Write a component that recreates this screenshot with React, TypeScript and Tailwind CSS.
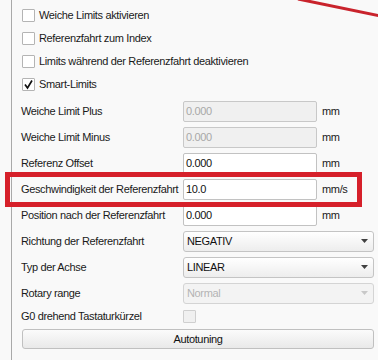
import React from 'react';

const font = { fontFamily: '"Liberation Sans", Arial, sans-serif' };

function Check({ checked = false, disabled = false }: { checked?: boolean; disabled?: boolean }) {
  return (
    <div
      className={
        'w-[13px] h-[13px] shrink-0 border rounded-[1px] flex items-center justify-center ' +
        (disabled ? 'bg-[#f0f0f0] border-[#cfcfcf]' : 'bg-white border-[#b4b4b4]')
      }
    >
      {checked && (
        <svg width="11" height="11" viewBox="0 0 11 11">
          <path d="M2 5.5 L4.5 9 L9 1.5" fill="none" stroke="#111" strokeWidth="1.7" />
        </svg>
      )}
    </div>
  );
}

function CheckRow({ label, checked }: { label: string; checked?: boolean }) {
  return (
    <div className="h-[23px] flex items-center gap-[4px] ml-px">
      <Check checked={checked} />
      <span className="text-[#1a1a1a]">{label}</span>
    </div>
  );
}

function InputRow({ label, value, unit, disabled }: { label: string; value: string; unit: string; disabled?: boolean }) {
  return (
    <div className="h-[26px] flex items-center">
      <span className="w-[162px] shrink-0 text-[#1a1a1a]">{label}</span>
      <div
        className={
          'w-[134px] h-[21px] border rounded-[2px] flex items-center px-[2px] ' +
          (disabled ? 'bg-[#f0f0f0] border-[#c8c8c8] text-[#a8a8a8]' : 'bg-white border-[#c2c2c2] text-[#111]')
        }
      >
        {value}
      </div>
      <span className="ml-[5px] text-[#1a1a1a]">{unit}</span>
    </div>
  );
}

function SelectRow({ label, value, disabled }: { label: string; value: string; disabled?: boolean }) {
  return (
    <div className="h-[26px] flex items-center">
      <span className="w-[162px] shrink-0 text-[#1a1a1a]">{label}</span>
      <div
        className={
          'w-[191px] h-[21px] border rounded-[3px] flex items-center justify-between pl-[3px] pr-[5px] ' +
          (disabled
            ? 'bg-[#f3f3f3] border-[#d4d4d4] text-[#b4b4b4]'
            : 'bg-gradient-to-b from-white to-[#ededed] border-[#c4c4c4] text-[#111]')
        }
      >
        <span>{value}</span>
        <svg width="7" height="4" viewBox="0 0 7 4">
          <polygon points="0,0 7,0 3.5,4" fill={disabled ? '#c8c8c8' : '#404040'} />
        </svg>
      </div>
    </div>
  );
}

export default function App() {
  return (
    <div className="relative w-[378px] h-[360px] overflow-hidden bg-[#f9f9f9] text-[11px] tracking-[-0.35px]" style={font}>
      <div className="ml-[11px] h-full border-l border-[#a9a9a9] pl-[9px] pt-[4px]">
        <CheckRow label="Weiche Limits aktivieren" />
        <CheckRow label="Referenzfahrt zum Index" />
        <CheckRow label="Limits während der Referenzfahrt deaktivieren" />
        <CheckRow label="Smart-Limits" checked />
        <div className="mt-[2px]">
          <InputRow label="Weiche Limit Plus" value="0.000" unit="mm" disabled />
          <InputRow label="Weiche Limit Minus" value="0.000" unit="mm" disabled />
          <InputRow label="Referenz Offset" value="0.000" unit="mm" />
          <InputRow label="Geschwindigkeit der Referenzfahrt" value="10.0" unit="mm/s" />
          <InputRow label="Position nach der Referenzfahrt" value="0.000" unit="mm" />
          <SelectRow label="Richtung der Referenzfahrt" value="NEGATIV" />
          <SelectRow label="Typ der Achse" value="LINEAR" />
          <SelectRow label="Rotary range" value="Normal" disabled />
          <div className="h-[21px] flex items-center">
            <span className="w-[162px] shrink-0 text-[#1a1a1a]">G0 drehend Tastaturkürzel</span>
            <Check disabled />
          </div>
        </div>
        <div className="mt-[2px] ml-px w-[352px] h-[20px] border border-[#c0c0c0] rounded-[3px] bg-gradient-to-b from-[#fbfbfb] to-[#e9e9e9] flex items-center justify-center text-[#111]">
          Autotuning
        </div>
      </div>

      <div className="absolute left-[5px] top-[172px] w-[357px] h-[35px] border-[5px] border-[#d6202a] pointer-events-none" />
      <svg className="absolute left-0 top-0 pointer-events-none" width="378" height="360">
        <line x1="298" y1="-1" x2="380" y2="16" stroke="#c9232c" strokeWidth="3" />
      </svg>
    </div>
  );
}
